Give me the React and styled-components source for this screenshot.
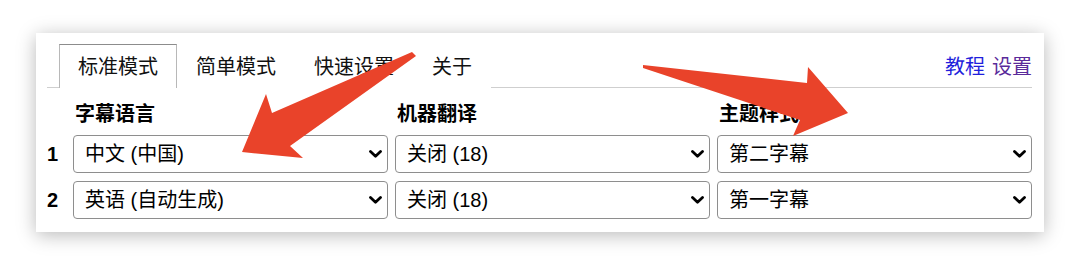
import React, { useState } from 'react';
import styled, { createGlobalStyle } from 'styled-components';

const GlobalStyle = createGlobalStyle`
  html, body {
    margin: 0;
    padding: 0;
    background: #ffffff;
  }
  body {
    font-family: "Liberation Sans", "Noto Sans CJK SC", sans-serif;
    color: #000;
  }
`;

const tabs = ['标准模式', '简单模式', '快速设置', '关于'];

const langOptions = ['中文 (中国)', '英语 (自动生成)', '日语', '韩语'];
const transOptions = ['关闭 (18)', '中文 (中国)', '英语'];
const styleOptions = ['第一字幕', '第二字幕'];

const rows = [
  { id: 1, lang: '中文 (中国)', trans: '关闭 (18)', theme: '第二字幕' },
  { id: 2, lang: '英语 (自动生成)', trans: '关闭 (18)', theme: '第一字幕' },
];

const Chevron = () => (
  <ChevronIcon viewBox="0 0 13 8" width="13" height="8">
    <path
      d="M1.5 1.5 L6.5 6.2 L11.5 1.5"
      fill="none"
      stroke="#000"
      strokeWidth="2.8"
      strokeLinecap="round"
      strokeLinejoin="round"
    />
  </ChevronIcon>
);

const Dropdown = ({ value, options, onChange }) => (
  <SelectWrap>
    <Select value={value} onChange={(e) => onChange(e.target.value)}>
      {options.map((o) => (
        <option key={o} value={o}>
          {o}
        </option>
      ))}
    </Select>
    <Chevron />
  </SelectWrap>
);

const Arrows = () => (
  <ArrowLayer viewBox="0 0 1080 271" width="1080" height="271">
    <polygon
      points="412,52 416,56 290,146 303,158 242,152 266,94 272,113"
      fill="#e9432a"
    />
    <polygon
      points="643,65 807,83 808,67 848,113 793,136 800,120 643,68"
      fill="#e9432a"
    />
  </ArrowLayer>
);

const App = () => {
  const [active, setActive] = useState(0);
  const [data, setData] = useState(rows);

  const update = (id, key, value) => {
    setData(data.map((r) => (r.id === id ? { ...r, [key]: value } : r)));
  };

  return (
    <Page>
      <GlobalStyle />
      <Card>
        <TabBar>
          {tabs.map((t, i) => (
            <Tab key={t} $active={i === active} onClick={() => setActive(i)}>
              {t}
            </Tab>
          ))}
          <Links>
            <Link href="#tutorial">教程</Link>
            <Link href="#settings" $visited>
              设置
            </Link>
          </Links>
        </TabBar>

        <Grid>
          <span />
          <Label>字幕语言</Label>
          <Label>机器翻译</Label>
          <Label>主题样式</Label>

          {data.map((r) => (
            <React.Fragment key={r.id}>
              <RowNum>{r.id}</RowNum>
              <Dropdown
                value={r.lang}
                options={langOptions}
                onChange={(v) => update(r.id, 'lang', v)}
              />
              <Dropdown
                value={r.trans}
                options={transOptions}
                onChange={(v) => update(r.id, 'trans', v)}
              />
              <Dropdown
                value={r.theme}
                options={styleOptions}
                onChange={(v) => update(r.id, 'theme', v)}
              />
            </React.Fragment>
          ))}
        </Grid>
      </Card>
      <Arrows />
    </Page>
  );
};

export default App;

const Page = styled.div`
  position: relative;
  width: 1080px;
  height: 271px;
  padding: 33px 0 0 36px;
  box-sizing: border-box;
  overflow: hidden;
`;

const Card = styled.div`
  width: 1008px;
  height: 199px;
  box-sizing: border-box;
  padding: 11px 12px 13px 11px;
  background: #fff;
  box-shadow: 0 3px 18px rgba(0, 0, 0, 0.28);
`;

const TabBar = styled.div`
  display: flex;
  align-items: flex-end;
  height: 44px;
  box-sizing: border-box;
  padding-left: 12px;
  border-bottom: 1px solid #cfcfcf;
`;

const Tab = styled.div`
  height: 43px;
  box-sizing: border-box;
  margin-bottom: -1px;
  padding: 0 18px;
  display: flex;
  align-items: center;
  font-size: 20px;
  line-height: 24px;
  color: #111;
  cursor: pointer;
  background: #fff;
  border: 1px solid transparent;
  border-bottom: none;
  ${(p) =>
    p.$active &&
    `
    border-color: #b8b8b8;
    border-top-color: #8c8c8c;
    height: 44px;
  `}
`;

const Links = styled.div`
  margin-left: auto;
  display: flex;
  gap: 7px;
  align-self: center;
  font-size: 20px;
  line-height: 24px;
  padding-top: 2px;
`;

const Link = styled.a`
  color: ${(p) => (p.$visited ? '#5a2a9a' : '#1f1fdc')};
  text-decoration: none;
`;

const Grid = styled.div`
  display: grid;
  grid-template-columns: 19px repeat(3, 1fr);
  column-gap: 7px;
  row-gap: 8px;
  align-items: center;
  padding-top: 14px;
`;

const Label = styled.div`
  font-size: 20px;
  line-height: 24px;
  font-weight: bold;
  padding-left: 2px;
  margin-bottom: 1px;
`;

const RowNum = styled.div`
  font-size: 20px;
  font-weight: bold;
  line-height: 24px;
`;

const SelectWrap = styled.div`
  position: relative;
  height: 38px;
`;

const Select = styled.select`
  appearance: none;
  -webkit-appearance: none;
  width: 100%;
  height: 100%;
  box-sizing: border-box;
  padding: 0 30px 0 11px;
  border: 1px solid #8e8e8e;
  border-radius: 4px;
  background: #fff;
  font-family: "Liberation Sans", "Noto Sans CJK SC", sans-serif;
  font-size: 20px;
  color: #000;
  outline: none;
`;

const ChevronIcon = styled.svg`
  position: absolute;
  right: 6px;
  top: 50%;
  margin-top: -4px;
  pointer-events: none;
`;

const ArrowLayer = styled.svg`
  position: absolute;
  left: 0;
  top: 0;
  pointer-events: none;
`;
